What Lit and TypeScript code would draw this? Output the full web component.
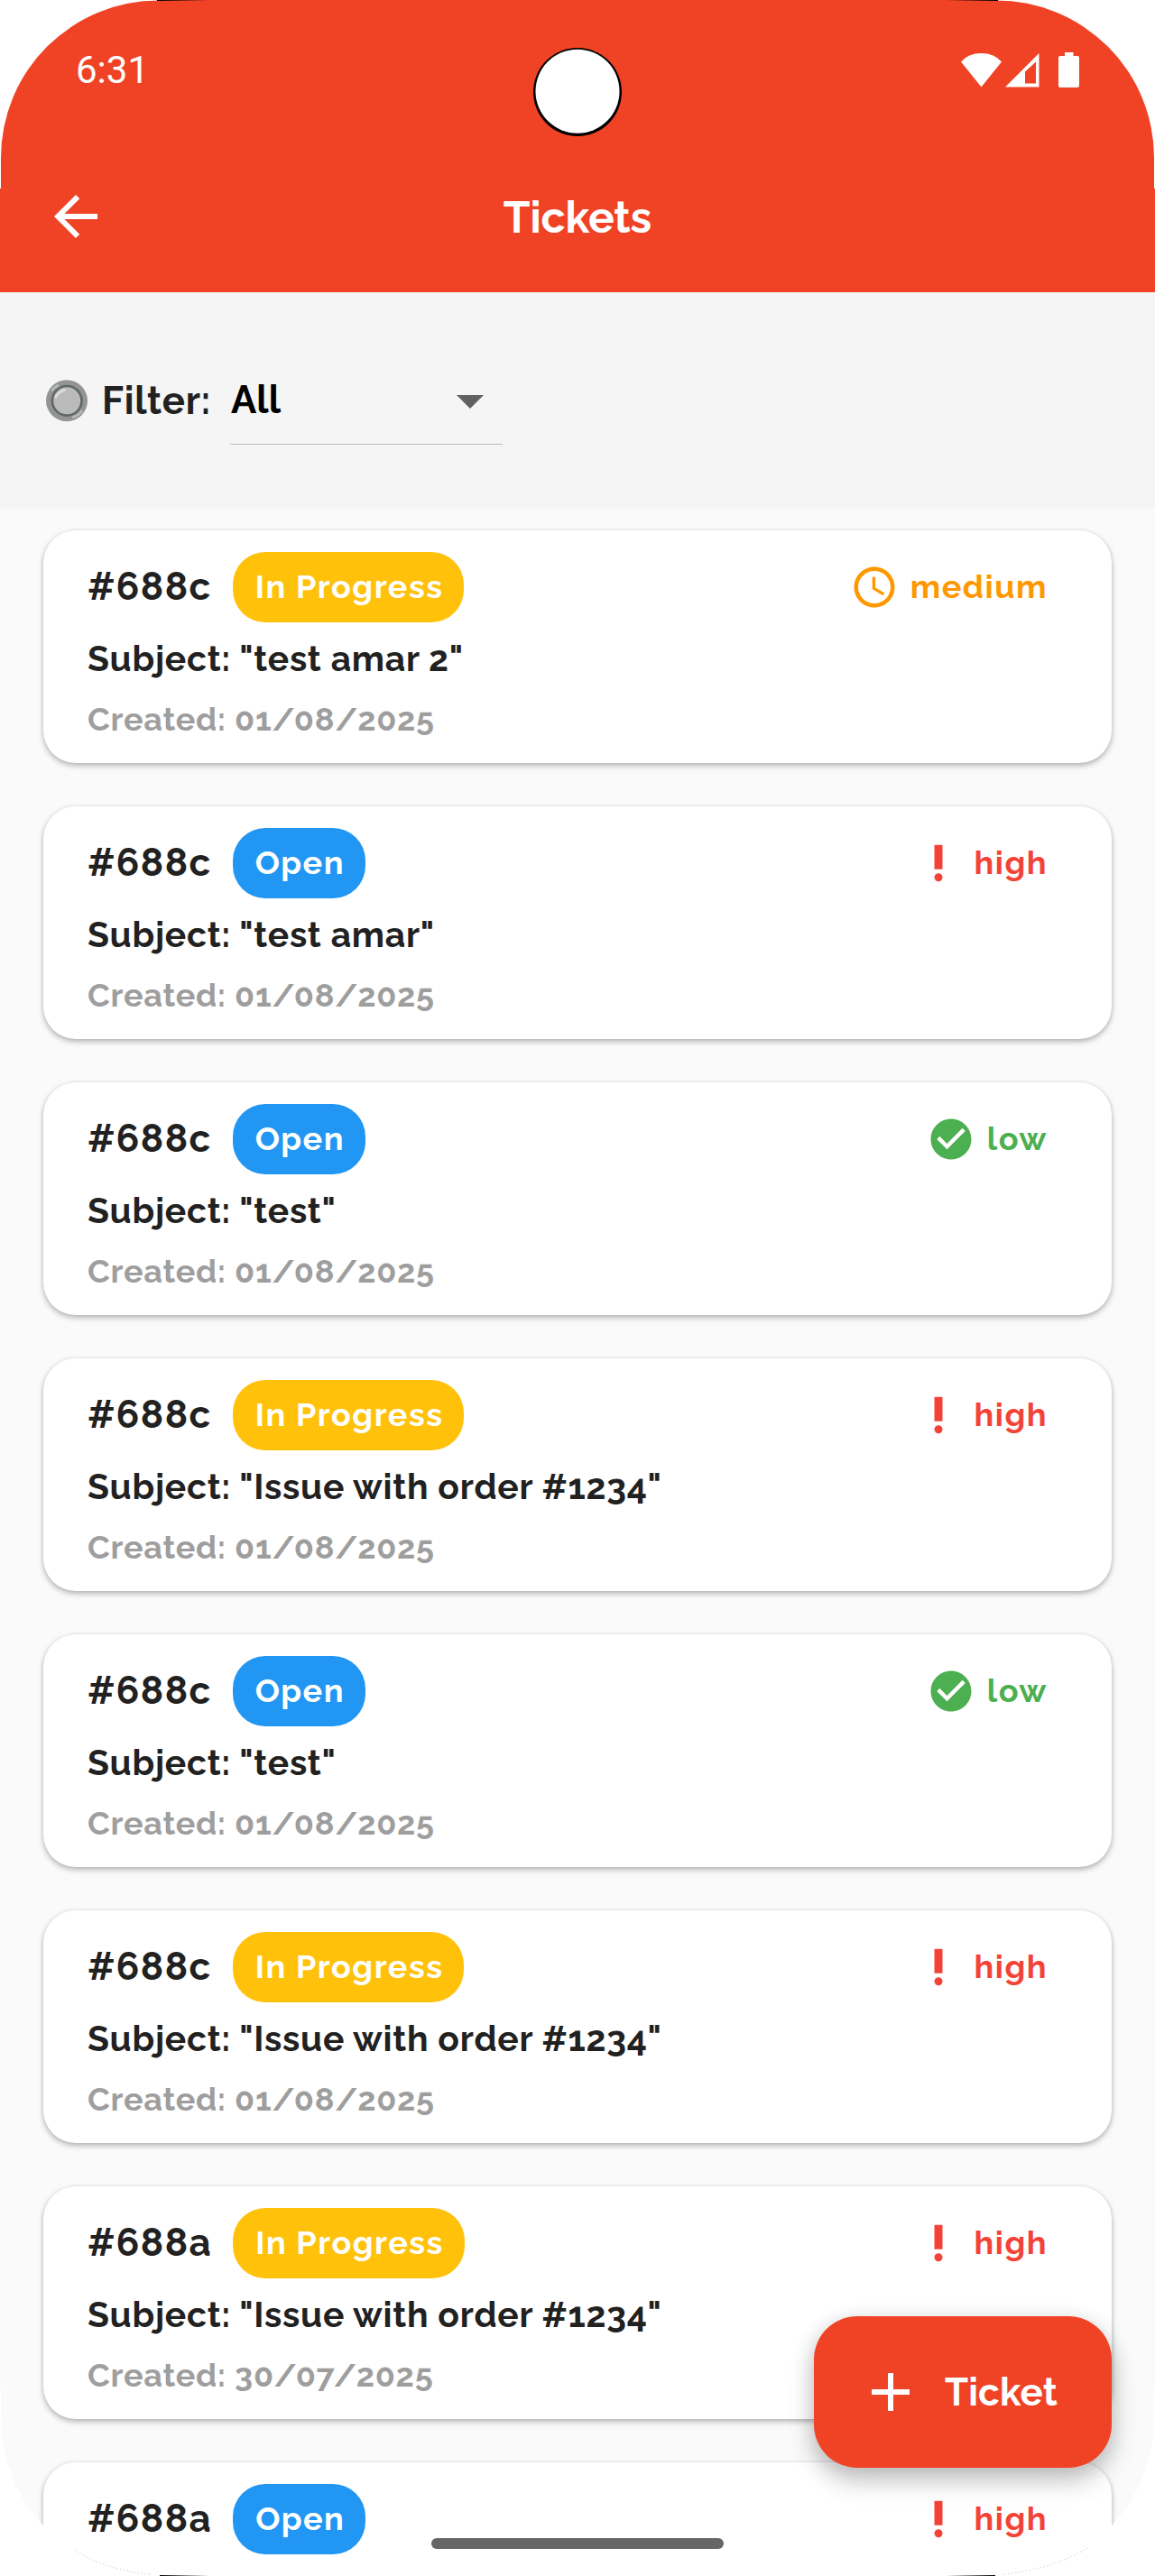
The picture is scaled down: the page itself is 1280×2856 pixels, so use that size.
import { LitElement, html, css, svg, nothing } from "lit";
import { customElement, property } from "lit/decorators.js";
import { classMap } from "lit/directives/class-map.js";

type Status = "In Progress" | "Open";
type Priority = "medium" | "high" | "low";

interface Ticket {
  id: string;
  status: Status;
  priority: Priority;
  subject?: string;
  created?: string;
}

const TICKETS: Ticket[] = [
  { id: "#688c", status: "In Progress", priority: "medium", subject: "test amar 2", created: "01/08/2025" },
  { id: "#688c", status: "Open", priority: "high", subject: "test amar", created: "01/08/2025" },
  { id: "#688c", status: "Open", priority: "low", subject: "test", created: "01/08/2025" },
  { id: "#688c", status: "In Progress", priority: "high", subject: "Issue with order #1234", created: "01/08/2025" },
  { id: "#688c", status: "Open", priority: "low", subject: "test", created: "01/08/2025" },
  { id: "#688c", status: "In Progress", priority: "high", subject: "Issue with order #1234", created: "01/08/2025" },
  { id: "#688a", status: "In Progress", priority: "high", subject: "Issue with order #1234", created: "30/07/2025" },
  { id: "#688a", status: "Open", priority: "high" },
];

const PRIORITY_ICONS = {
  medium: svg`<path d="M11.99 2C6.47 2 2 6.48 2 12s4.47 10 9.99 10C17.52 22 22 17.52 22 12S17.52 2 11.99 2zM12 20c-4.42 0-8-3.58-8-8s3.58-8 8-8 8 3.58 8 8-3.58 8-8 8zm.5-13H11v6l5.25 3.15.75-1.23-4.5-2.67z"/>`,
  high: svg`<circle cx="12" cy="19" r="2"/><path d="M10 3h4v12h-4z"/>`,
  low: svg`<path d="M12 2C6.48 2 2 6.48 2 12s4.48 10 10 10 10-4.48 10-10S17.52 2 12 2zm-2 15l-5-5 1.41-1.41L10 14.17l7.59-7.59L19 8l-9 9z"/>`,
};

@customElement("ticket-card")
class TicketCard extends LitElement {
  @property({ attribute: false }) ticket!: Ticket;

  static styles = css`
    :host {
      display: block;
      box-sizing: border-box;
      height: 258px;
      padding: 24px 71px 28px 49px;
      border-radius: 36px;
      background: #fff;
      box-shadow: 0 3px 6px rgba(0, 0, 0, 0.27), 0 0 4px rgba(0, 0, 0, 0.07);
      white-space: nowrap;
      font-weight: 700;
    }
    .top {
      display: flex;
      align-items: center;
      height: 78px;
    }
    .id {
      font-size: 42px;
      line-height: 78px;
      letter-spacing: 1.5px;
      color: #212121;
      margin-right: 23px;
    }
    .badge {
      box-sizing: border-box;
      height: 78px;
      padding: 0 23px 0 25px;
      border-radius: 36px;
      font-size: 36px;
      line-height: 76px;
      letter-spacing: 1.5px;
      color: #fff;
      background: #2196f3;
    }
    .badge.progress {
      background: #ffc10a;
    }
    .priority {
      display: flex;
      align-items: center;
      gap: 13px;
      height: 78px;
      margin-left: auto;
      font-size: 36px;
      letter-spacing: 1.5px;
    }
    .label {
      height: 78px;
      line-height: 76px;
    }
    .priority svg {
      width: 54px;
      height: 54px;
      fill: currentColor;
    }
    .medium { color: #ff9800; }
    .high { color: #f44336; }
    .low { color: #4caf50; }
    .subject {
      margin-top: 17px;
      font-size: 39px;
      line-height: 46px;
      letter-spacing: 0.75px;
      color: #212121;
    }
    .created {
      margin-top: 23px;
      font-size: 36px;
      line-height: 42px;
      letter-spacing: 0.75px;
      color: #9e9e9e;
    }
  `;

  render() {
    const t = this.ticket;
    return html`
      <div class="top">
        <span class="id">${t.id}</span>
        <span class=${classMap({ badge: true, progress: t.status === "In Progress" })}>${t.status}</span>
        <span class=${classMap({ priority: true, [t.priority]: true })}>
          <svg viewBox="0 0 24 24">${PRIORITY_ICONS[t.priority]}</svg>
          <span class="label">${t.priority}</span>
        </span>
      </div>
      ${t.subject ? html`<div class="subject">Subject: "${t.subject}"</div>` : nothing}
      ${t.created ? html`<div class="created">Created: ${t.created}</div>` : nothing}
    `;
  }
}

@customElement("app-root")
class AppRoot extends LitElement {
  static styles = css`
    :host {
      display: block;
      position: relative;
      width: 1280px;
      height: 2856px;
      overflow: hidden;
      background: #fafafa;
      font-family: Raleway, Lato, "Open Sans", sans-serif;
      font-weight: 700;
      white-space: nowrap;
    }
    .header {
      height: 324px;
      background: #f04225;
      color: #fff;
    }
    .status {
      display: flex;
      align-items: center;
      justify-content: space-between;
      box-sizing: border-box;
      height: 156px;
      padding: 53px 84px 54px 84px;
      font-family: Roboto, sans-serif;
      font-weight: 400;
      font-size: 42px;
      line-height: 49px;
    }
    .status svg {
      width: 131px;
      height: 39px;
    }
    .appbar {
      display: grid;
      grid-template-columns: 1fr auto 1fr;
      align-items: center;
      height: 168px;
      padding: 0 48px;
    }
    .back {
      width: 72px;
      height: 72px;
      fill: #fff;
    }
    .title {
      padding-top: 2px;
      font-size: 48px;
      line-height: 56px;
      letter-spacing: -0.1px;
    }
    .filter {
      display: flex;
      align-items: center;
      box-sizing: border-box;
      height: 240px;
      padding: 0 51px;
      background: #f5f5f5;
      font-size: 42px;
      line-height: 49px;
    }
    .radio {
      width: 46px;
      height: 48px;
      margin-right: 16px;
    }
    .caption {
      box-sizing: border-box;
      width: 142px;
      padding-top: 1px;
      letter-spacing: 0.75px;
      color: #212121;
    }
    .select {
      display: flex;
      align-items: center;
      justify-content: space-between;
      box-sizing: border-box;
      width: 302px;
      height: 98px;
      padding-left: 1px;
      border-bottom: 1px solid #bdbdbd;
      color: #000;
      letter-spacing: 0.2px;
    }
    .select svg {
      width: 72px;
      height: 72px;
      fill: #616161;
    }
    .list {
      display: flex;
      flex-direction: column;
      gap: 48px;
      padding: 24px 48px;
    }
    .fab {
      position: absolute;
      right: 48px;
      bottom: 120px;
      display: flex;
      align-items: center;
      gap: 24px;
      box-sizing: border-box;
      width: 330px;
      height: 168px;
      padding-left: 49px;
      border-radius: 48px;
      background: #f04225;
      color: #fff;
      font-size: 42px;
      line-height: 49px;
      letter-spacing: 0.2px;
      box-shadow: 0 14px 28px rgba(0, 0, 0, 0.24), 0 2px 22px rgba(0, 0, 0, 0.09);
    }
    .fab svg {
      width: 72px;
      height: 72px;
      fill: #fff;
    }
    .home {
      position: absolute;
      left: 478px;
      bottom: 30px;
      width: 324px;
      height: 12px;
      border-radius: 6px;
      background: #666;
    }
    .frame {
      position: absolute;
      inset: 0;
      width: 1280px;
      height: 2856px;
      pointer-events: none;
    }
  `;

  render() {
    return html`
      <div class="header">
        <div class="status">
          <span>6:31</span>
          <svg viewBox="1065 58 131 39" fill="#fff">
            <path d="M1065 68.5Q1073 59 1087.5 59T1110 68.5L1087.5 96.5Z" />
            <path fill-rule="evenodd" d="M1151.5 59V96.5H1114ZM1148 68.5L1136 79.5V92.5H1148Z" />
            <path d="M1180 58h9.5v4h4.5a2 2 0 0 1 2 2v31a2 2 0 0 1-2 2h-19a2 2 0 0 1-2-2v-31a2 2 0 0 1 2-2h5z" />
          </svg>
        </div>
        <div class="appbar">
          <svg class="back" viewBox="0 0 24 24">
            <path d="M20 11H7.83l5.59-5.59L12 4l-8 8 8 8 1.41-1.41L7.83 13H20v-2z" />
          </svg>
          <span class="title">Tickets</span>
          <span></span>
        </div>
      </div>
      <div class="filter">
        <svg class="radio" viewBox="0 0 46 48" fill="none" stroke-linecap="round">
          <circle cx="23" cy="24.3" r="23" fill="#949494" />
          <circle cx="23.2" cy="24.3" r="16.3" fill="#bababa" stroke="#5f6869" stroke-width="2.6" />
          <path d="M11 20Q13.5 14.5 20.5 12.5" stroke="#dadada" stroke-width="3" />
          <path d="M7 12.5Q9 9.5 13 7.5M30 42.5Q36 40.5 39.5 36" stroke="#b9b9b9" stroke-width="2.6" />
        </svg>
        <span class="caption">Filter:</span>
        <div class="select">
          <span>All</span>
          <svg viewBox="0 0 24 24"><path d="M7 10l5 5 5-5z" /></svg>
        </div>
      </div>
      <div class="list">
        ${TICKETS.map((t) => html`<ticket-card .ticket=${t}></ticket-card>`)}
      </div>
      <div class="fab">
        <svg viewBox="0 0 24 24"><path d="M19 13h-6v6h-2v-6H5v-2h6V5h2v6h6v2z" /></svg>
        <span>Ticket</span>
      </div>
      <div class="home"></div>
      <svg class="frame" viewBox="0 0 1280 2856">
        <defs>
          <linearGradient id="edge">
            <stop offset="0" stop-color="#000" />
            <stop offset="1" stop-color="#000" stop-opacity="0" />
          </linearGradient>
          <path id="corner" d="M0 0H176V0.5A175 174.5 0 0 0 1 175V209H0Z" fill="#fff" />
        </defs>
        <use href="#corner" />
        <use href="#corner" transform="matrix(-1 0 0 1 1280 0)" />
        <use href="#corner" transform="matrix(1 0 0 -1 0 2856)" />
        <use href="#corner" transform="matrix(-1 0 0 -1 1280 2856)" />
        <rect x="174" y="0" width="58" height="1" fill="url(#edge)" />
        <rect x="174" y="0" width="58" height="1" fill="url(#edge)" transform="matrix(-1 0 0 1 1280 0)" />
        <rect x="177" y="2855" width="55" height="1" fill="url(#edge)" />
        <rect x="177" y="2855" width="55" height="1" fill="url(#edge)" transform="matrix(-1 0 0 1 1280 0)" />
        <g fill="none" stroke="#999" stroke-width="0.7" stroke-dasharray="1 3">
          <path d="M82 2827Q116 2849 168 2854.5" />
          <path d="M1205 2825Q1168 2848 1110 2854.5" />
        </g>
        <circle cx="640" cy="102" r="49" fill="#000" />
        <circle cx="640" cy="101.2" r="46.5" fill="#fff" />
      </svg>
    `;
  }
}
